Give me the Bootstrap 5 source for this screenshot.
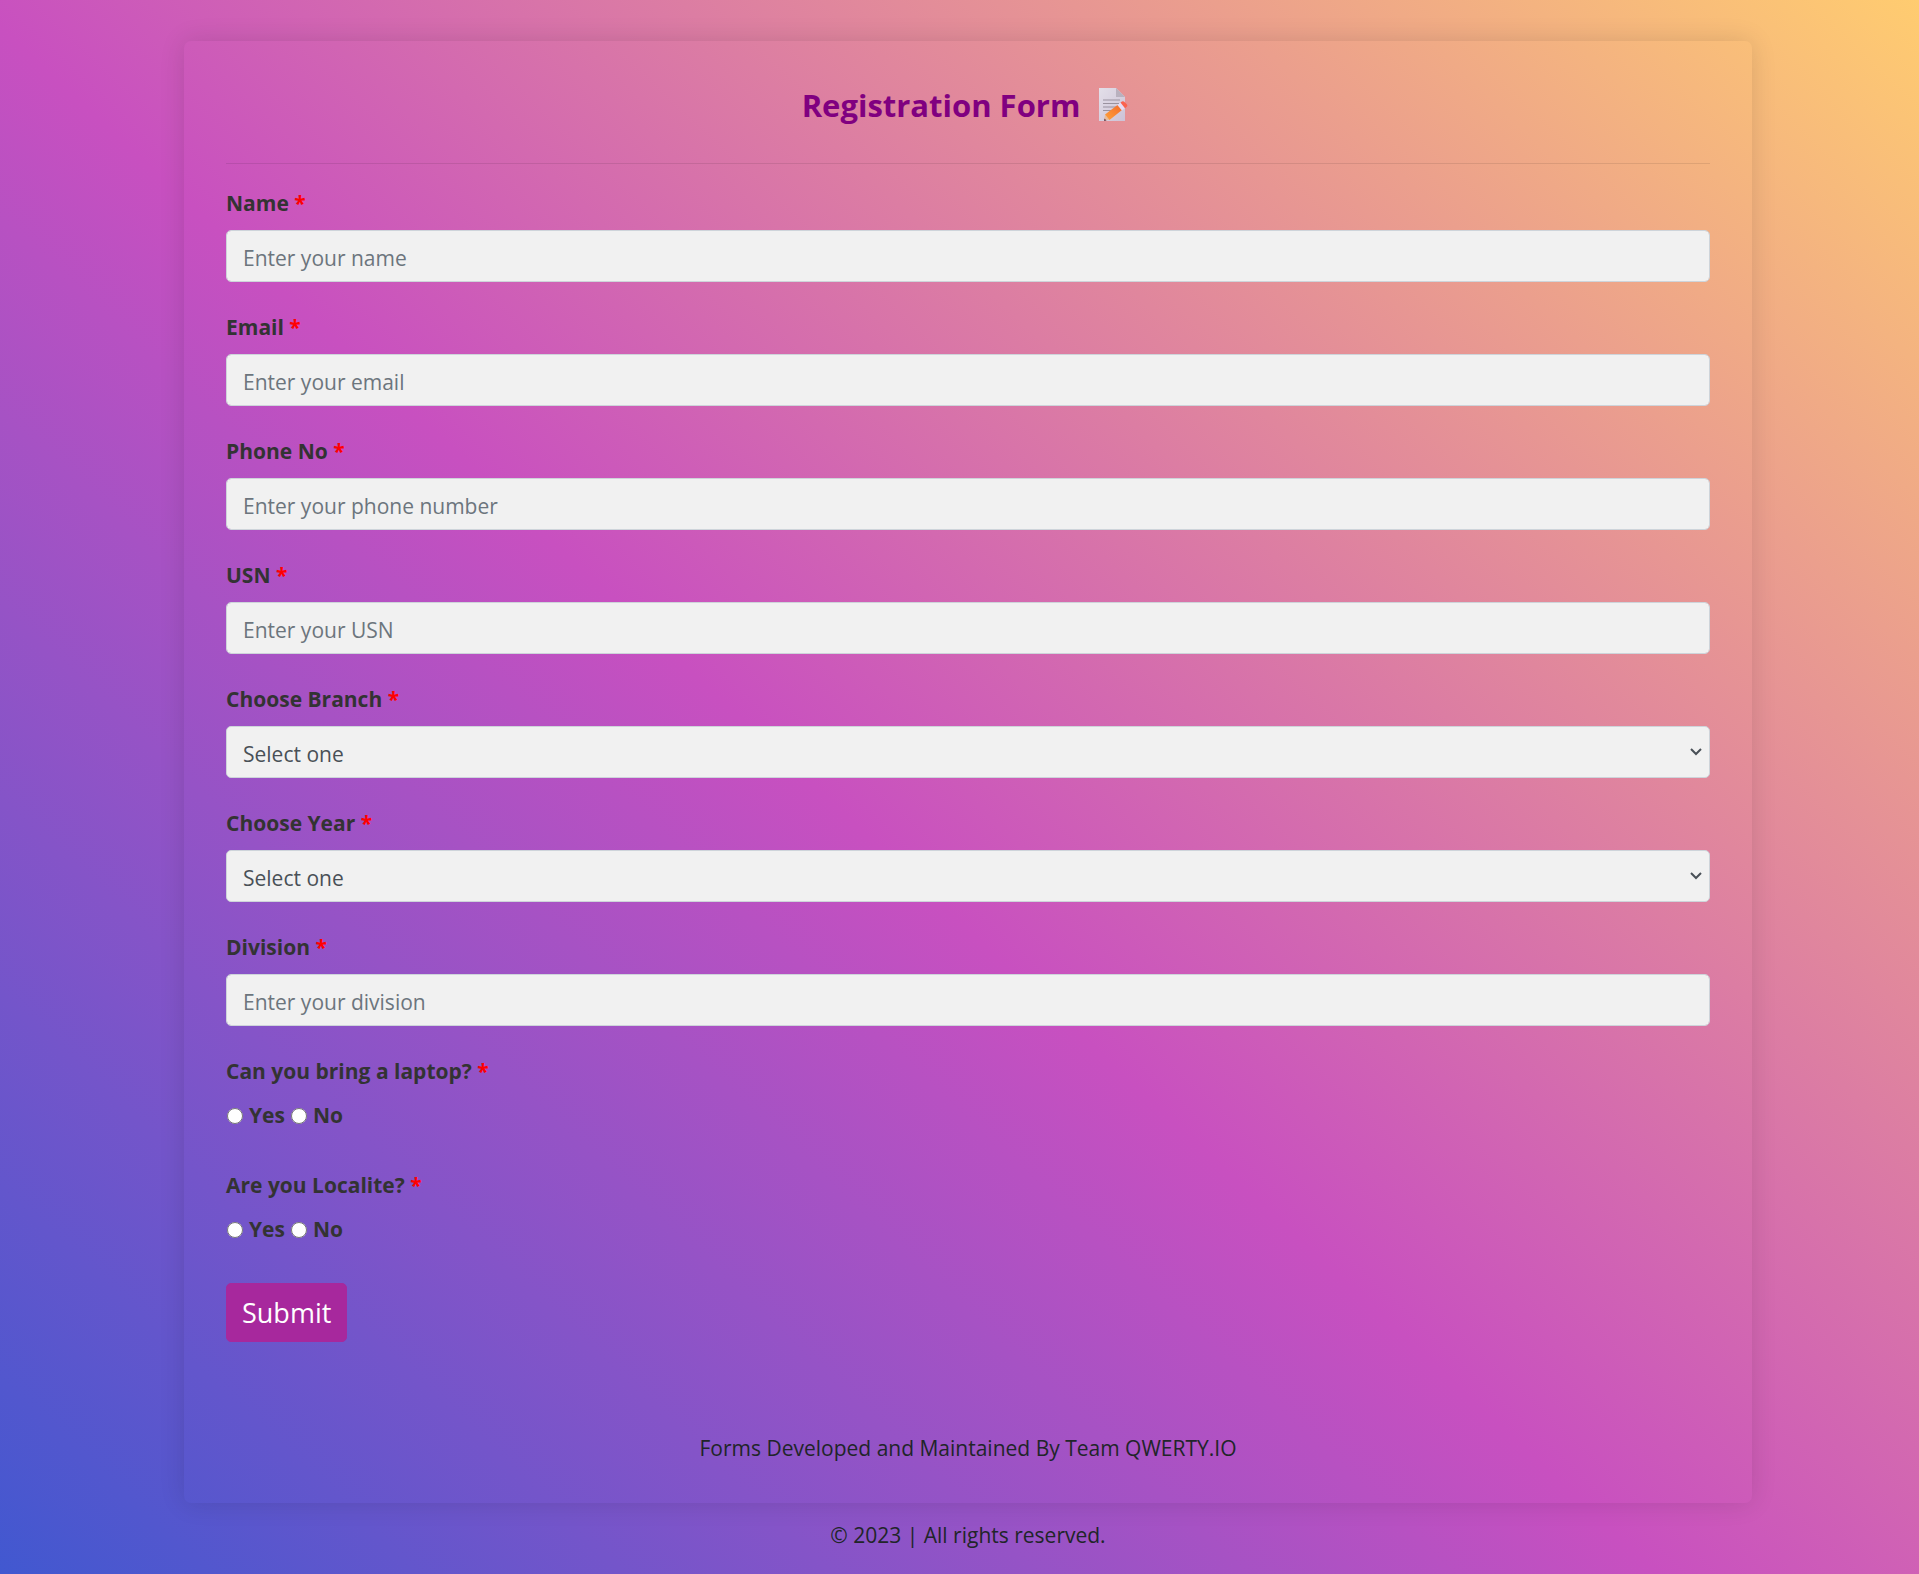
<!DOCTYPE html>
<html lang="en">
<head>
<meta charset="utf-8">
<meta name="viewport" content="width=device-width, initial-scale=1">
<title>Registration Form</title>
<link rel="stylesheet" href="https://cdn.jsdelivr.net/npm/bootstrap@5.3.0/dist/css/bootstrap.min.css">
<style>
  html { min-height: 100%; }
  body {
    min-height: 100vh;
    font-family: "Segoe UI", "Open Sans", "Noto Sans", sans-serif;
    font-size: 21px;
    line-height: 33px;
    color: #212529;
    background: linear-gradient(43deg, #4158d0 0%, #c850c0 46%, #ffcc70 100%) no-repeat;
  }
  .page-wrap { padding: 41px 0 20px 17px; }
  .form-panel {
    width: 100%;
    max-width: 1568px;
    padding: 42px 42px 38px;
    border-radius: 7px;
    box-shadow: 0 0 26px rgba(0, 0, 0, .12);
  }
  .form-title { gap: 18px; margin: 0; padding: 2px 4px 0 0; font-size: 31px; line-height: 40px; font-weight: 700; color: purple; }
  .title-rule { margin: 38px 0 23px; border-top: 1px solid rgba(0, 0, 0, .6); opacity: .15; }
  .field { margin-bottom: 29px; }
  .field .form-label, .choice-set legend { font-size: 21px; line-height: 33px; font-weight: 700; color: #333; }
  .field .form-label { display: block; margin-bottom: 10px; }
  .req { color: red; }
  .field .form-control, .field .form-select {
    height: 52px;
    padding: 10px 16px 6px;
    font-size: 21px;
    line-height: 34px;
    color: #495057;
    background-color: #f1f1f1;
    border: 1px solid #ced4da;
    border-radius: 5px;
  }
  .field .form-control::placeholder { color: #6c757d; }
  .field .form-select {
    background-image: url("data:image/svg+xml,%3Csvg xmlns='http://www.w3.org/2000/svg' viewBox='0 0 12 8'%3E%3Cpath d='M1 1l5 5 5-5' fill='none' stroke='%23495057' stroke-width='2'/%3E%3C/svg%3E");
    background-position: right 7px center;
    background-size: 12px 8px;
  }
  .choice-set { margin-bottom: 37px; }
  .choice-set legend { margin-bottom: 11px; }
  .choice-set .choices { gap: 6px; height: 33px; padding-left: 1px; }
  .choice-set label { font-weight: 700; color: #333; }
  .choice-set input { width: 16px; height: 16px; margin: 0; }
  .btn-send {
    height: 59px;
    padding: 0 15px;
    font-size: 27px;
    line-height: 57px;
    color: #fff;
    background: #a7289d;
    border: 1px solid #a7289d;
    border-radius: 5px;
  }
  .btn-send:hover { color: #fff; background: #8d2085; }
  .credits { margin: 90px 0 0; }
  .rights { margin: 16px 0 0; }
</style>
<script src="https://cdn.jsdelivr.net/npm/bootstrap@5.3.0/dist/js/bootstrap.bundle.min.js"></script>
</head>
<body>
<div class="page-wrap">
  <main class="form-panel mx-auto">
    <h1 class="form-title d-flex justify-content-center align-items-center">
      <span>Registration Form</span>
      <svg width="32" height="34" viewBox="0 0 32 34" aria-hidden="true">
        <defs>
          <linearGradient id="sheet" x1="0" y1="0" x2="1" y2="1"><stop offset="0" stop-color="#e3dfe9"/><stop offset="1" stop-color="#cdc2d6"/></linearGradient>
          <linearGradient id="wood" x1="0" y1="1" x2="1" y2="0"><stop offset="0" stop-color="#ffa13b"/><stop offset="1" stop-color="#f36b2c"/></linearGradient>
        </defs>
        <path d="M1 0H18L27 9V33H1Z" fill="url(#sheet)"/>
        <path d="M18 0L27 9H18Z" fill="#b9b1bf"/>
        <path d="M5 12H22M5 15.500H21M5 19H18M5 22.500H14" stroke="#9a929f" stroke-width="1.200"/>
        <path d="M7 26.500L11.500 31.500L6 33Z" fill="#e8bd9d"/>
        <path d="M6.500 30.500L8.500 32.500L6 33Z" fill="#5d3a50"/>
        <path d="M7 26.500L19.500 17L24 22L11.500 32Z" fill="url(#wood)"/>
        <path d="M19.500 17L22.500 14.500L27 20L24 22.500Z" fill="#e5dcf5"/>
        <path d="M22.500 14.500L24 13.400Q25.500 12.800 27 14.500L29 16.500Q30 18 28.500 19L27 20.200Z" fill="#fb624f"/>
      </svg>
    </h1>
    <hr class="title-rule">
    <form>
      <div class="field">
        <label class="form-label" for="name">Name <span class="req">*</span></label>
        <input class="form-control" id="name" type="text" placeholder="Enter your name">
      </div>
      <div class="field">
        <label class="form-label" for="email">Email <span class="req">*</span></label>
        <input class="form-control" id="email" type="email" placeholder="Enter your email">
      </div>
      <div class="field">
        <label class="form-label" for="phone">Phone No <span class="req">*</span></label>
        <input class="form-control" id="phone" type="tel" placeholder="Enter your phone number">
      </div>
      <div class="field">
        <label class="form-label" for="usn">USN <span class="req">*</span></label>
        <input class="form-control" id="usn" type="text" placeholder="Enter your USN">
      </div>
      <div class="field">
        <label class="form-label" for="branch">Choose Branch <span class="req">*</span></label>
        <select class="form-select" id="branch"><option>Select one</option></select>
      </div>
      <div class="field">
        <label class="form-label" for="year">Choose Year <span class="req">*</span></label>
        <select class="form-select" id="year"><option>Select one</option></select>
      </div>
      <div class="field">
        <label class="form-label" for="division">Division <span class="req">*</span></label>
        <input class="form-control" id="division" type="text" placeholder="Enter your division">
      </div>
      <fieldset class="choice-set">
        <legend>Can you bring a laptop? <span class="req">*</span></legend>
        <div class="choices d-flex align-items-center">
          <input type="radio" name="laptop" id="laptop-yes"><label for="laptop-yes">Yes</label>
          <input type="radio" name="laptop" id="laptop-no"><label for="laptop-no">No</label>
        </div>
      </fieldset>
      <fieldset class="choice-set">
        <legend>Are you Localite? <span class="req">*</span></legend>
        <div class="choices d-flex align-items-center">
          <input type="radio" name="localite" id="localite-yes"><label for="localite-yes">Yes</label>
          <input type="radio" name="localite" id="localite-no"><label for="localite-no">No</label>
        </div>
      </fieldset>
      <button class="btn btn-send" type="submit">Submit</button>
    </form>
    <p class="credits text-center">Forms Developed and Maintained By Team QWERTY.IO</p>
  </main>
  <footer><p class="rights text-center">© 2023 | All rights reserved.</p></footer>
</div>
</body>
</html>
